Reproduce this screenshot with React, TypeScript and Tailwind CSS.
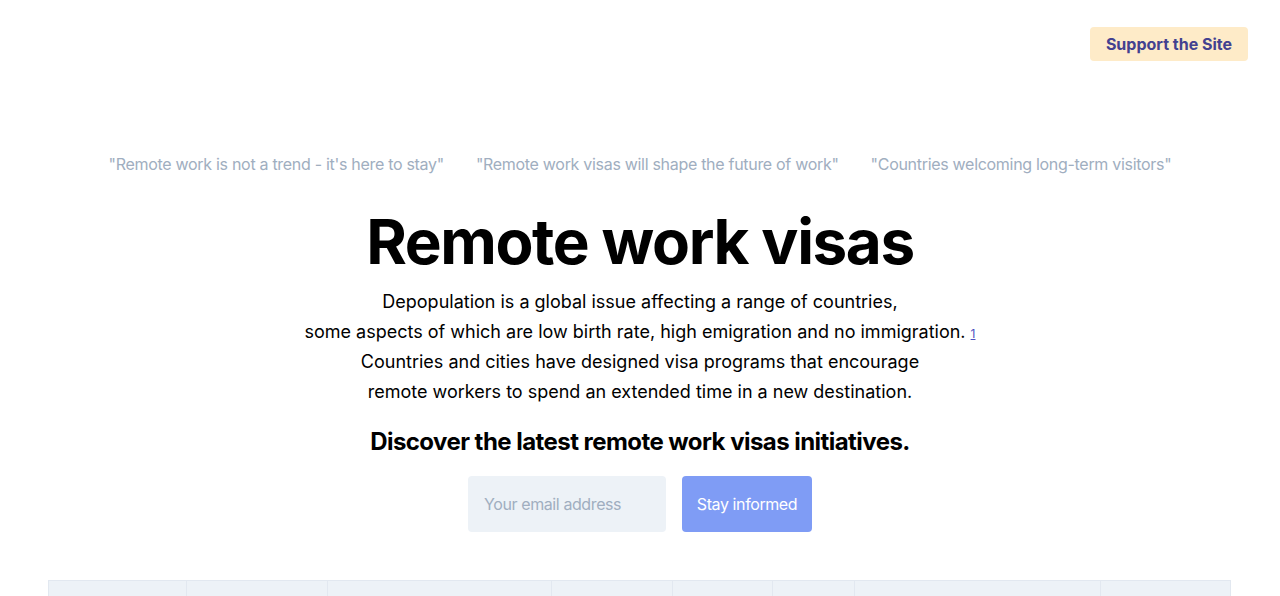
import React from 'react';

const quotes = [
  '"Remote work is not a trend - it\'s here to stay"',
  '"Remote work visas will shape the future of work"',
  '"Countries welcoming long-term visitors"',
];

// column widths of the visas table, only its header is in view
const columns = ['w-[138px]', 'w-[141px]', 'w-[224px]', 'w-[122px]', 'w-[100px]', 'w-[82px]', 'w-[246px]', 'w-[130px]'];

export default function App() {
  return (
    <div className="h-screen overflow-hidden bg-white text-black font-['Inter','Liberation_Sans',sans-serif]">
      <header className="flex justify-end pt-[27px] pr-8">
        <a
          href="#"
          className="rounded bg-[#feebc8] px-4 py-[5px] text-base leading-6 font-bold text-[#434190]"
        >
          Support the Site
        </a>
      </header>

      <section className="mt-[91px] flex flex-col items-center text-center">
        <ul className="flex gap-8 text-base leading-6 tracking-[-0.3px] text-[#a0aec0]">
          {quotes.map((q) => (
            <li key={q}>{q}</li>
          ))}
        </ul>

        <h1 className="mt-[34px] text-[62px] leading-[64px] font-bold tracking-[-1.4px]">
          Remote work visas
        </h1>

        <p className="mt-[13px] text-lg leading-[30px]">
          Depopulation is a global issue affecting a range of countries,
          <br />
          some aspects of which are low birth rate, high emigration and no immigration.{' '}
          <a href="#" className="align-baseline text-xs text-[#4c51bf] underline">
            1
          </a>
          <br />
          Countries and cities have designed visa programs that encourage
          <br />
          remote workers to spend an extended time in a new destination.
        </p>

        <h2 className="mt-[19px] text-2xl leading-8 font-bold tracking-[-0.55px]">
          Discover the latest remote work visas initiatives.
        </h2>

        <form className="mt-[18px] flex gap-4" onSubmit={(e) => e.preventDefault()}>
          <input
            type="email"
            placeholder="Your email address"
            className="h-14 w-[198px] rounded bg-[#edf2f7] px-4 text-base tracking-[-0.4px] text-gray-700 outline-none placeholder:text-[#a0aec0]"
          />
          <button
            type="submit"
            className="h-14 w-[130px] whitespace-nowrap rounded bg-[#7f9cf5] text-base tracking-[-0.4px] text-white"
          >
            Stay informed
          </button>
        </form>
      </section>

      <div className="mx-12 mt-12">
        <table className="w-[1183px] border-collapse">
          <thead>
            <tr className="bg-[#edf2f7]">
              {columns.map((w, i) => (
                <th key={i} className={`${w} h-14 border border-[#e2e8f0]`} />
              ))}
            </tr>
          </thead>
        </table>
      </div>
    </div>
  );
}
